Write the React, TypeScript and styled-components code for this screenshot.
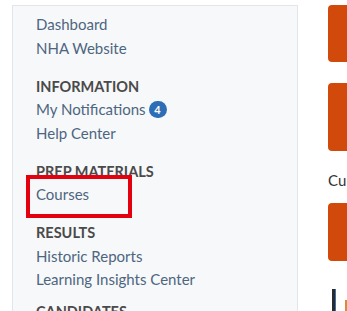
import styled, { createGlobalStyle } from "styled-components";

const GlobalStyle = createGlobalStyle`
  html, body {
    margin: 0;
    padding: 0;
    background: #ffffff;
    overflow: hidden;
  }
  body {
    font-family: Lato, "Open Sans", sans-serif;
  }
`;

const Page = styled.div`
  display: flex;
  align-items: flex-start;
  gap: 30px;
  padding: 5px 0 0 12px;
  width: 347px;
  height: 311px;
  box-sizing: border-box;
  overflow: hidden;
`;

const Sidebar = styled.nav`
  position: relative;
  flex: 0 0 286px;
  height: 340px;
  box-sizing: border-box;
  background: #f7f8fa;
  border: 1px solid #e2e5e9;
  padding: 7px 0 0 23px;
`;

const Section = styled.div<{ $gap?: number }>`
  display: flex;
  flex-direction: column;
  margin-top: ${(p) => p.$gap ?? 14.5}px;
`;

const Heading = styled.div`
  font-size: 14.5px;
  font-weight: 700;
  color: #4a4a4a;
  line-height: 23.5px;
  text-transform: uppercase;
`;

const NavLink = styled.a`
  display: flex;
  align-items: center;
  gap: 5px;
  font-size: 15px;
  line-height: 23.5px;
  color: #4d6680;
  text-decoration: none;
`;

const Badge = styled.span`
  display: inline-flex;
  align-items: center;
  justify-content: center;
  min-width: 18px;
  height: 17px;
  margin-left: -2px;
  border-radius: 9px;
  background: #2d6db5;
  color: #ffffff;
  font-size: 11px;
  font-weight: 700;
`;

const Highlight = styled.div`
  position: absolute;
  left: 13px;
  top: 169px;
  width: 106px;
  height: 43px;
  box-sizing: border-box;
  border: 4px solid #e3000f;
`;

const Main = styled.main`
  flex: 0 0 140px;
  display: flex;
  flex-direction: column;
`;

const Tile = styled.div<{ $h: number; $mt?: number }>`
  flex-shrink: 0;
  height: ${(p) => p.$h}px;
  margin-top: ${(p) => p.$mt ?? 0}px;
  background: #d1490b;
  border-radius: 4px;
`;

const Caption = styled.div`
  flex-shrink: 0;
  margin-top: 19px;
  font-size: 15px;
  line-height: 20px;
  color: #333333;
  white-space: nowrap;
`;

const ChartArea = styled.div`
  flex-shrink: 0;
  margin-top: 28px;
  display: flex;
  align-items: flex-start;
  gap: 9px;
  padding-left: 4px;
`;

const Axis = styled.div`
  width: 3px;
  height: 40px;
  background: #2b2b2b;
  border-right: 1px solid #3f6fb0;
`;

const Bar = styled.div`
  margin-top: 11px;
  width: 3px;
  height: 30px;
  background: #d98a3a;
`;

export default function App() {
  return (
    <>
      <GlobalStyle />
      <Page>
        <Sidebar>
          <Section $gap={0}>
            <NavLink href="#">Dashboard</NavLink>
            <NavLink href="#">NHA Website</NavLink>
          </Section>
          <Section>
            <Heading>Information</Heading>
            <NavLink href="#">
              My Notifications <Badge>4</Badge>
            </NavLink>
            <NavLink href="#">Help Center</NavLink>
          </Section>
          <Section>
            <Heading>Prep Materials</Heading>
            <NavLink href="#">Courses</NavLink>
          </Section>
          <Section>
            <Heading>Results</Heading>
            <NavLink href="#">Historic Reports</NavLink>
            <NavLink href="#">Learning Insights Center</NavLink>
          </Section>
          <Section $gap={8}>
            <Heading>Candidates</Heading>
          </Section>
          <Highlight />
        </Sidebar>
        <Main>
          <Tile $h={57} />
          <Tile $h={68} $mt={21} />
          <Caption>Current Exams</Caption>
          <Tile $h={58} $mt={13} />
          <ChartArea>
            <Axis />
            <Bar />
          </ChartArea>
        </Main>
      </Page>
    </>
  );
}
